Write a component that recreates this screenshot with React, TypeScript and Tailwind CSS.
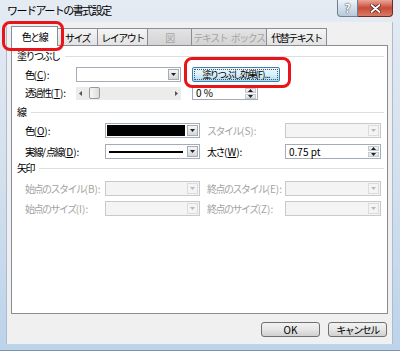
import React from 'react'

type Opt = { disabled?: boolean }

function L({ children, tight }: { children: React.ReactNode; tight?: boolean }) {
  return <span className={tight ? 'tracking-[-0.9px]' : 'tracking-[0px]'}>{children}</span>
}

function Tri({ disabled, up }: Opt & { up?: boolean }) {
  return (
    <svg width="5" height="3" viewBox="0 0 5 3">
      <path d={up ? 'M0 3h5L2.5 0z' : 'M0 0h5L2.5 3z'} fill={disabled ? '#b9b9b9' : '#222'} />
    </svg>
  )
}

function DropBtn({ disabled }: Opt) {
  return (
    <div
      className={
        disabled
          ? 'w-[11px] h-full flex items-center justify-center border border-[#dcdcdc] bg-[#f4f4f4]'
          : 'w-[11px] h-full flex items-center justify-center border border-[#a3adb9] bg-gradient-to-b from-[#f6f6f6] to-[#d6d6d6]'
      }
    >
      <Tri disabled={disabled} />
    </div>
  )
}

function Combo({ w, disabled, children }: Opt & { w: string; children?: React.ReactNode }) {
  return (
    <div
      className={`${w} h-[15px] flex border p-px ${
        disabled ? 'border-[#c9c9c9] bg-[#f4f4f4]' : 'border-[#a5acb5] bg-white'
      }`}
    >
      <div className="flex-1 flex items-center pr-[2px]">{children}</div>
      <DropBtn disabled={disabled} />
    </div>
  )
}

function Spin({ w, value }: { w: string; value: string }) {
  return (
    <div className={`${w} h-[14px] flex border border-[#a5acb5] bg-white p-px`}>
      <div className="flex-1 flex items-center pl-[2px] text-[10px] tracking-[0px] leading-none">{value}</div>
      <div className="w-[11px] flex flex-col gap-px">
        <div className="flex-1 flex items-center justify-center border border-[#c4cad2] bg-gradient-to-b from-[#f6f6f6] to-[#dedede]">
          <Tri up />
        </div>
        <div className="flex-1 flex items-center justify-center border border-[#c4cad2] bg-gradient-to-b from-[#f6f6f6] to-[#dedede]">
          <Tri />
        </div>
      </div>
    </div>
  )
}

function Section({ title }: { title: string }) {
  return (
    <div className="flex items-center h-[12px] pl-[5px] pr-[3px]">
      <span className="leading-none">{title}</span>
      <div className="flex-1 h-px bg-[#dadfe5] ml-[5px]" />
    </div>
  )
}

function Label({ w, disabled, children }: Opt & { w: string; children: React.ReactNode }) {
  return (
    <span className={`${w} shrink-0 leading-none ${disabled ? 'text-[#a3a3a3]' : 'text-black'}`}>{children}</span>
  )
}

const tabs = [
  { label: 'サイズ', w: 'w-[41px]' },
  { label: 'レイアウト', w: 'w-[51px]' },
  { label: '図', w: 'w-[45px]', disabled: true },
  { label: 'テキスト\u2002ボックス', w: 'w-[76px]', disabled: true },
  { label: '代替テキスト', w: 'w-[61px]' },
]

export default function App() {
  return (
    <div className="relative w-[400px] h-[351px] flex flex-col overflow-hidden whitespace-nowrap bg-gradient-to-b from-[#e4ebf3] via-[#d3e0ee] to-[#bcd3ea] border-b border-[#7d93ad] font-['Noto_Sans_CJK_JP',sans-serif] text-[10px] tracking-[-1.5px] text-black">
      {/* Title bar */}
      <div className="h-[22px] shrink-0 flex items-start">
        <span className="ml-[7px] mt-[5px] text-[11px] leading-none">ワードアートの書式設定</span>
        <div className="ml-auto mr-[7px] flex">
          <div className="w-[21px] h-[17px] flex items-center justify-center border border-t-0 border-[#6f7f93] rounded-bl-[4px] bg-gradient-to-b from-[#eef3f8] via-[#d3deea] to-[#b9c8da]">
            <span className="text-[12px] font-bold leading-none tracking-[0px] text-white [text-shadow:0_0_1px_#2b3a4d,0_0_1px_#2b3a4d]">?</span>
          </div>
          <div className="w-[35px] h-[17px] flex items-center justify-center border border-t-0 border-l-0 border-[#6b2c25] rounded-br-[4px] bg-gradient-to-b from-[#e8a596] via-[#c8493a] to-[#d97a64]">
            <svg width="11" height="9" viewBox="0 0 11 9">
              <path d="M1.5 1l8 7M9.5 1l-8 7" stroke="#4a1d17" strokeWidth="3.4" strokeLinecap="round" />
              <path d="M1.5 1l8 7M9.5 1l-8 7" stroke="#fff" strokeWidth="1.8" strokeLinecap="round" />
            </svg>
          </div>
        </div>
      </div>

      {/* Dialog body */}
      <div className="flex-1 ml-[6px] mr-[7px] mb-[6px] bg-[#f0f0f0] border-l border-r border-[#a9bcd1] flex flex-col px-[4px] pt-[4px]">
        {/* Tabs */}
        <div className="h-[19px] flex items-end">
          <div className="relative z-10 w-[47px] h-[20px] -mb-px flex items-center justify-center border border-b-0 border-[#898c95] bg-white">
            色と線
          </div>
          {tabs.map((t) => (
            <div
              key={t.label}
              className={`${t.w} -ml-px h-[17px] flex items-center justify-center border border-b-0 border-[#898c95] ${
                t.disabled
                  ? 'bg-gradient-to-b from-[#e3e3e3] to-[#d4d4d4] text-[#a5a5a5]'
                  : 'bg-gradient-to-b from-[#f5f5f5] to-[#e2e2e2]'
              }`}
            >
              {t.label}
            </div>
          ))}
        </div>

        {/* Panel */}
        <div className="h-[269px] border border-[#898c95] bg-white flex flex-col pt-[4px]">
          <Section title="塗りつぶし" />

          <div className="mt-[5px] h-[15px] flex items-center pl-[13px]">
            <Label w="w-[51px]">
              色<L>(<u>C</u>):</L>
            </Label>
            <Combo w="w-[105px]" />
            <div className="ml-[11px] w-[88px] h-[15px] rounded-[2px] border border-[#3c7fb1] bg-gradient-to-b from-[#eaf6fd] via-[#d9f0fc] to-[#a7d9f5] p-px">
              <div className="h-full border border-dotted border-[#555] flex items-center justify-center leading-none text-[9.5px] tracking-[-1.9px]">
                塗りつぶし効果<L tight>(F)...</L>
              </div>
            </div>
          </div>

          <div className="mt-[4px] h-[14px] flex items-center pl-[13px]">
            <Label w="w-[51px]">
              透過性<L>(<u>T</u>):</L>
            </Label>
            <div className="w-[105px] h-[13px] flex items-center bg-[#ececec] px-[2px]">
              <svg width="3" height="5" viewBox="0 0 3 5" className="ml-[1px]">
                <path d="M3 0v5L0 2.5z" fill="#555" />
              </svg>
              <div className="ml-[7px] w-[11px] h-[12px] rounded-[2px] border border-[#9a9a9a] bg-gradient-to-r from-[#f7f7f7] to-[#dcdcdc]" />
              <svg width="3" height="5" viewBox="0 0 3 5" className="ml-auto mr-[1px]">
                <path d="M0 0v5L3 2.5z" fill="#555" />
              </svg>
            </div>
            <div className="ml-[11px]">
              <Spin w="w-[66px]" value="0 %" />
            </div>
          </div>

          <div className="mt-[6px]">
            <Section title="線" />
          </div>

          <div className="mt-[5px] h-[15px] flex items-center pl-[13px]">
            <Label w="w-[80px]">
              色<L>(<u>O</u>):</L>
            </Label>
            <Combo w="w-[95px]">
              <div className="w-full h-[11px] bg-black" />
            </Combo>
            <Label w="w-[78px] ml-[7px]" disabled>
              スタイル<L>(S):</L>
            </Label>
            <Combo w="w-[96px]" disabled />
          </div>

          <div className="mt-[6px] h-[15px] flex items-center pl-[13px]">
            <Label w="w-[80px]">
              実線<L>/</L>点線<L>(<u>D</u>):</L>
            </Label>
            <Combo w="w-[95px]">
              <div className="w-full mx-[2px] h-[2px] bg-black" />
            </Combo>
            <Label w="w-[78px] ml-[7px]">
              太さ<L>(<u>W</u>):</L>
            </Label>
            <Spin w="w-[96px] h-[15px]" value="0.75 pt" />
          </div>

          <div className="mt-[3px]">
            <Section title="矢印" />
          </div>

          <div className="mt-[7px] h-[15px] flex items-center pl-[13px]">
            <Label w="w-[80px]" disabled>
              始点のスタイル<L>(B):</L>
            </Label>
            <Combo w="w-[95px]" disabled />
            <Label w="w-[78px] ml-[7px]" disabled>
              終点のスタイル<L>(E):</L>
            </Label>
            <Combo w="w-[96px]" disabled />
          </div>

          <div className="mt-[5px] h-[15px] flex items-center pl-[13px]">
            <Label w="w-[80px]" disabled>
              始点のサイズ<L>(I):</L>
            </Label>
            <Combo w="w-[95px]" disabled />
            <Label w="w-[78px] ml-[7px]" disabled>
              終点のサイズ<L>(Z):</L>
            </Label>
            <Combo w="w-[96px]" disabled />
          </div>
        </div>

        {/* Buttons */}
        <div className="mt-[8px] flex justify-end gap-[8px] pr-px">
          <button className="w-[59px] h-[15px] rounded-[3px] border border-[#707070] bg-gradient-to-b from-[#f2f2f2] via-[#e6e6e6] to-[#d0d0d0] flex items-center justify-center leading-none tracking-[0px]">
            OK
          </button>
          <button className="w-[59px] h-[15px] rounded-[3px] border border-[#707070] bg-gradient-to-b from-[#f2f2f2] via-[#e6e6e6] to-[#d0d0d0] flex items-center justify-center leading-none">
            キャンセル
          </button>
        </div>
      </div>

      {/* Red annotation marks */}
      <div className="absolute left-[2px] top-[21px] w-[62px] h-[30px] border-[3px] border-[#e8141a] rounded-[8px] z-20" />
      <div className="absolute left-[184px] top-[57px] w-[107px] h-[31px] border-[3px] border-[#e8141a] rounded-[8px] z-20" />
    </div>
  )
}
